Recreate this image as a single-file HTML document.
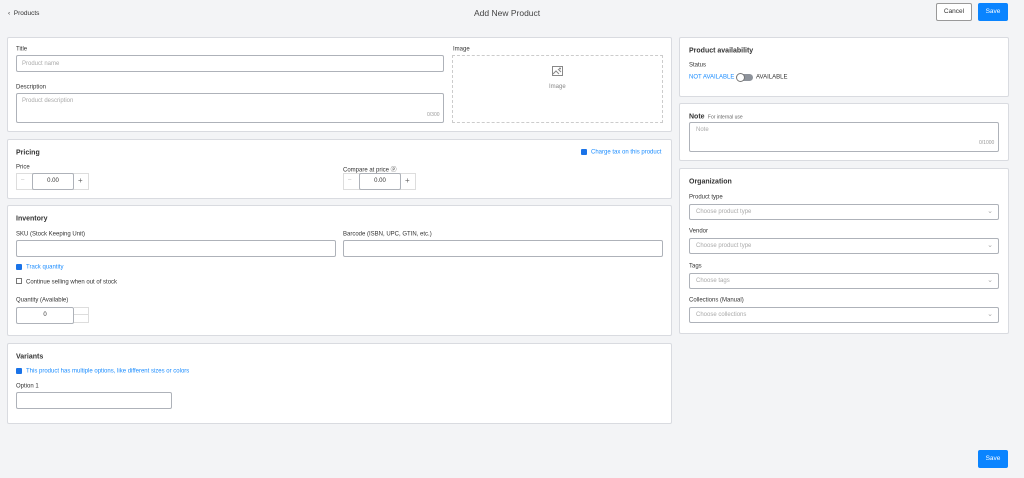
<!DOCTYPE html>
<html><head><meta charset="utf-8"><style>
*{box-sizing:border-box;margin:0;padding:0}
body{width:1024px;height:478px;background:#f3f4f6;font-family:"Liberation Sans",sans-serif;color:#333;position:relative;overflow:hidden;font-size:6px}
.a{position:absolute}
.card{position:absolute;background:#fff;border:1px solid #d9dbe0;border-radius:2px}
.in{position:absolute;background:#fff;border:1px solid #aeb2b9;border-radius:2px}
.lbl{position:absolute;font-size:6px;color:#333;transform:translateY(1.5px)}
.h{position:absolute;font-size:7px;font-weight:bold;color:#333;transform:translateY(1.5px)}
.ph{position:absolute;color:#aaa;font-size:6px;transform:translateY(2px)}
.blue{color:#1a8cff;transform:translateY(1.5px)}
.cb{position:absolute;width:6px;height:6px;background:#1a73e8;border-radius:1px}
.sel:after{content:"⌄";position:absolute;right:5px;top:2px;color:#aaa;font-size:7px}
</style></head><body>
<div class="a" style="left:8px;top:10px;font-size:6.5px">‹&nbsp; Products</div>
<div class="a" style="left:474px;top:8px;font-size:8.5px;color:#444">Add New Product</div>
<div class="a" style="left:936px;top:3px;width:36px;height:18px;background:#fff;border:1px solid #999;border-radius:2px;font-size:6.5px;text-align:center;line-height:16px">Cancel</div>
<div class="a" style="left:978px;top:3px;width:30px;height:18px;background:#0a84ff;border-radius:2px;color:#fff;font-size:6.5px;text-align:center;line-height:18px">Save</div>
<div class="a" style="left:978px;top:450px;width:30px;height:18px;background:#0a84ff;border-radius:2px;color:#fff;font-size:6.5px;text-align:center;line-height:18px">Save</div>

<div class="card" style="left:7px;top:37px;width:665px;height:95px"></div>
<div class="lbl" style="left:16px;top:45px">Title</div>
<div class="in" style="left:16px;top:55px;width:428px;height:17px"></div>
<div class="ph" style="left:22px;top:59px">Product name</div>
<div class="lbl" style="left:16px;top:83px">Description</div>
<div class="in" style="left:16px;top:93px;width:428px;height:30px"></div>
<div class="ph" style="left:22px;top:96px">Product description</div>
<div class="ph" style="left:427px;top:110px;font-size:5px;color:#999">0/300</div>
<div class="lbl" style="left:453px;top:45px">Image</div>
<div class="a" style="left:452px;top:55px;width:211px;height:68px;border:1px dashed #ccc"></div>
<svg class="a" style="left:552px;top:66px" width="11" height="10" viewBox="0 0 11 10"><rect x="0.5" y="0.5" width="10" height="9" fill="none" stroke="#888"/><path d="M1 8 L4 5 L7 8 M6 3 L9 6" stroke="#888" fill="none"/><circle cx="8" cy="2.5" r="1" fill="#888"/></svg>
<div class="ph" style="left:549px;top:82px;color:#888">Image</div>

<div class="card" style="left:7px;top:139px;width:665px;height:60px"></div>
<div class="h" style="left:16px;top:148px">Pricing</div>
<div class="cb" style="left:581px;top:149px"></div>
<div class="a blue" style="left:591px;top:148px">Charge tax on this product</div>
<div class="lbl" style="left:16px;top:163px">Price</div>
<div class="a" style="left:16px;top:173px;width:73px;height:17px;border:1px solid #ddd"></div>
<div class="in" style="left:32px;top:173px;width:42px;height:17px;text-align:center;line-height:15px">0.00</div>
<div class="a" style="left:21px;top:177px;color:#bbb">–</div>
<div class="a" style="left:78px;top:176px;color:#666;font-size:8px">+</div>
<div class="lbl" style="left:343px;top:163px">Compare at price ⓟ</div>
<div class="a" style="left:343px;top:173px;width:73px;height:17px;border:1px solid #ddd"></div>
<div class="in" style="left:359px;top:173px;width:42px;height:17px;text-align:center;line-height:15px">0.00</div>
<div class="a" style="left:348px;top:177px;color:#bbb">–</div>
<div class="a" style="left:405px;top:176px;color:#666;font-size:8px">+</div>

<div class="card" style="left:7px;top:205px;width:665px;height:131px"></div>
<div class="h" style="left:16px;top:214px">Inventory</div>
<div class="lbl" style="left:16px;top:230px">SKU (Stock Keeping Unit)</div>
<div class="in" style="left:16px;top:240px;width:320px;height:17px"></div>
<div class="lbl" style="left:343px;top:230px">Barcode (ISBN, UPC, GTIN, etc.)</div>
<div class="in" style="left:343px;top:240px;width:320px;height:17px"></div>
<div class="cb" style="left:16px;top:264px"></div>
<div class="a blue" style="left:26px;top:263px">Track quantity</div>
<div class="a" style="left:16px;top:278px;width:6px;height:6px;border:1px solid #777"></div>
<div class="lbl" style="left:26px;top:278px">Continue selling when out of stock</div>
<div class="lbl" style="left:16px;top:296px">Quantity (Available)</div>
<div class="in" style="left:16px;top:307px;width:58px;height:17px;text-align:center;line-height:15px">0</div>
<div class="a" style="left:74px;top:307px;width:15px;height:8px;border:1px solid #ddd;border-left:none"></div>
<div class="a" style="left:74px;top:315px;width:15px;height:8px;border:1px solid #ddd;border-left:none;border-top:none"></div>

<div class="card" style="left:7px;top:343px;width:665px;height:81px"></div>
<div class="h" style="left:16px;top:352px">Variants</div>
<div class="cb" style="left:16px;top:368px"></div>
<div class="a blue" style="left:26px;top:367px">This product has multiple options, like different sizes or colors</div>
<div class="lbl" style="left:16px;top:382px">Option 1</div>
<div class="in" style="left:16px;top:392px;width:156px;height:17px"></div>

<div class="card" style="left:679px;top:37px;width:330px;height:60px"></div>
<div class="h" style="left:689px;top:46px">Product availability</div>
<div class="lbl" style="left:689px;top:61px">Status</div>
<div class="a blue" style="left:689px;top:73px">NOT AVAILABLE</div>
<div class="a" style="left:737px;top:74px;width:16px;height:7px;background:#8e939b;border-radius:4px"></div>
<div class="a" style="left:736px;top:73px;width:9px;height:9px;background:#fff;border:1px solid #777;border-radius:5px"></div>
<div class="lbl" style="left:756px;top:73px">AVAILABLE</div>

<div class="card" style="left:679px;top:103px;width:330px;height:58px"></div>
<div class="h" style="left:689px;top:112px">Note <span style="font-weight:normal;font-size:5px;color:#666">&nbsp;For internal use</span></div>
<div class="in" style="left:689px;top:122px;width:310px;height:30px"></div>
<div class="ph" style="left:696px;top:125px">Note</div>
<div class="ph" style="left:979px;top:138px;font-size:5px;color:#999">0/1000</div>

<div class="card" style="left:679px;top:168px;width:330px;height:166px"></div>
<div class="h" style="left:689px;top:177px">Organization</div>
<div class="lbl" style="left:689px;top:193px">Product type</div>
<div class="in sel" style="left:689px;top:204px;width:310px;height:16px"></div>
<div class="ph" style="left:696px;top:207px">Choose product type</div>
<div class="lbl" style="left:689px;top:227px">Vendor</div>
<div class="in sel" style="left:689px;top:238px;width:310px;height:16px"></div>
<div class="ph" style="left:696px;top:241px">Choose product type</div>
<div class="lbl" style="left:689px;top:262px">Tags</div>
<div class="in sel" style="left:689px;top:273px;width:310px;height:16px"></div>
<div class="ph" style="left:696px;top:276px">Choose tags</div>
<div class="lbl" style="left:689px;top:296px">Collections (Manual)</div>
<div class="in sel" style="left:689px;top:307px;width:310px;height:16px"></div>
<div class="ph" style="left:696px;top:310px">Choose collections</div>
</body></html>
